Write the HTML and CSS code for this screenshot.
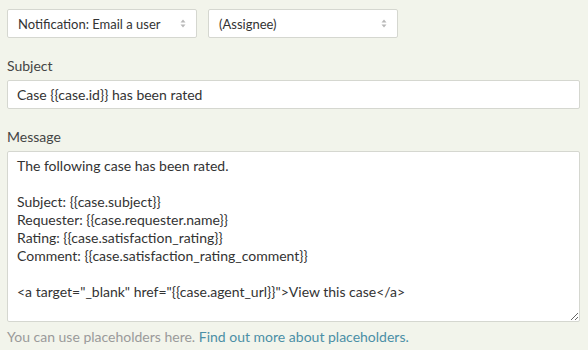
FILE: index.html
```html
<html>
<head>
    <title>Email notification</title>
    <link rel="stylesheet" href="styles.css">
</head>
<body>
<div class="action-form">
    <div class="selects">
        <div class="select-box">
            <span>Notification: Email a user</span>
            <svg class="arrows" width="6" height="9" viewBox="0 0 6 9"><path d="M3 0.5L5.5 3.5H0.5Z M3 8.5L0.5 5.5H5.5Z" fill="#b8b8b8"/></svg>
        </div>
        <div class="select-box">
            <span>(Assignee)</span>
            <svg class="arrows" width="6" height="9" viewBox="0 0 6 9"><path d="M3 0.5L5.5 3.5H0.5Z M3 8.5L0.5 5.5H5.5Z" fill="#b8b8b8"/></svg>
        </div>
    </div>

    <label class="field-label" for="subject">Subject</label>
    <input id="subject" class="text-input" type="text" value="Case {{case.id}} has been rated">

    <label class="field-label" for="message">Message</label>
    <textarea id="message" class="text-area">The following case has been rated.

Subject: {{case.subject}}
Requester: {{case.requester.name}}
Rating: {{case.satisfaction_rating}}
Comment: {{case.satisfaction_rating_comment}}

&lt;a target="_blank" href="{{case.agent_url}}"&gt;View this case&lt;/a&gt;</textarea>

    <p class="help">You can use placeholders here. <a href="#">Find out more about placeholders.</a></p>
</div>
</body>
</html>
```

FILE: styles.css
```css
body {
    margin: 0;
    background-color: #f2f4eb;
    font-family: Lato, "Open Sans", sans-serif;
    font-size: 14px;
    color: #333;
}
.action-form {
    padding: 9px 9px 0 7px;
}
.selects {
    display: flex;
    gap: 11px;
}
.select-box {
    box-sizing: border-box;
    width: 190px;
    height: 29px;
    padding: 0 10px 0 10px;
    display: flex;
    align-items: center;
    justify-content: space-between;
    font-size: 13px;
    background: white;
    border: 1px solid #d5d7d0;
    border-radius: 2px;
}
.field-label {
    display: block;
    margin: 19px 0 6px;
    line-height: 17px;
    color: #444;
}
.text-input,
.text-area {
    box-sizing: border-box;
    display: block;
    width: 573px;
    margin: 0;
    padding: 0 9px;
    font: inherit;
    color: #333;
    background: white;
    border: 1px solid #d5d7d0;
    border-radius: 2px;
}
.text-input {
    height: 29px;
}
.text-area {
    height: 171px;
    padding-top: 5px;
    line-height: 18px;
    resize: vertical;
}
.help {
    margin: 6px 0 0;
    line-height: 17px;
    color: #9a9a9a;
}
.help a {
    color: #4b8fa6;
    text-decoration: none;
}
```
